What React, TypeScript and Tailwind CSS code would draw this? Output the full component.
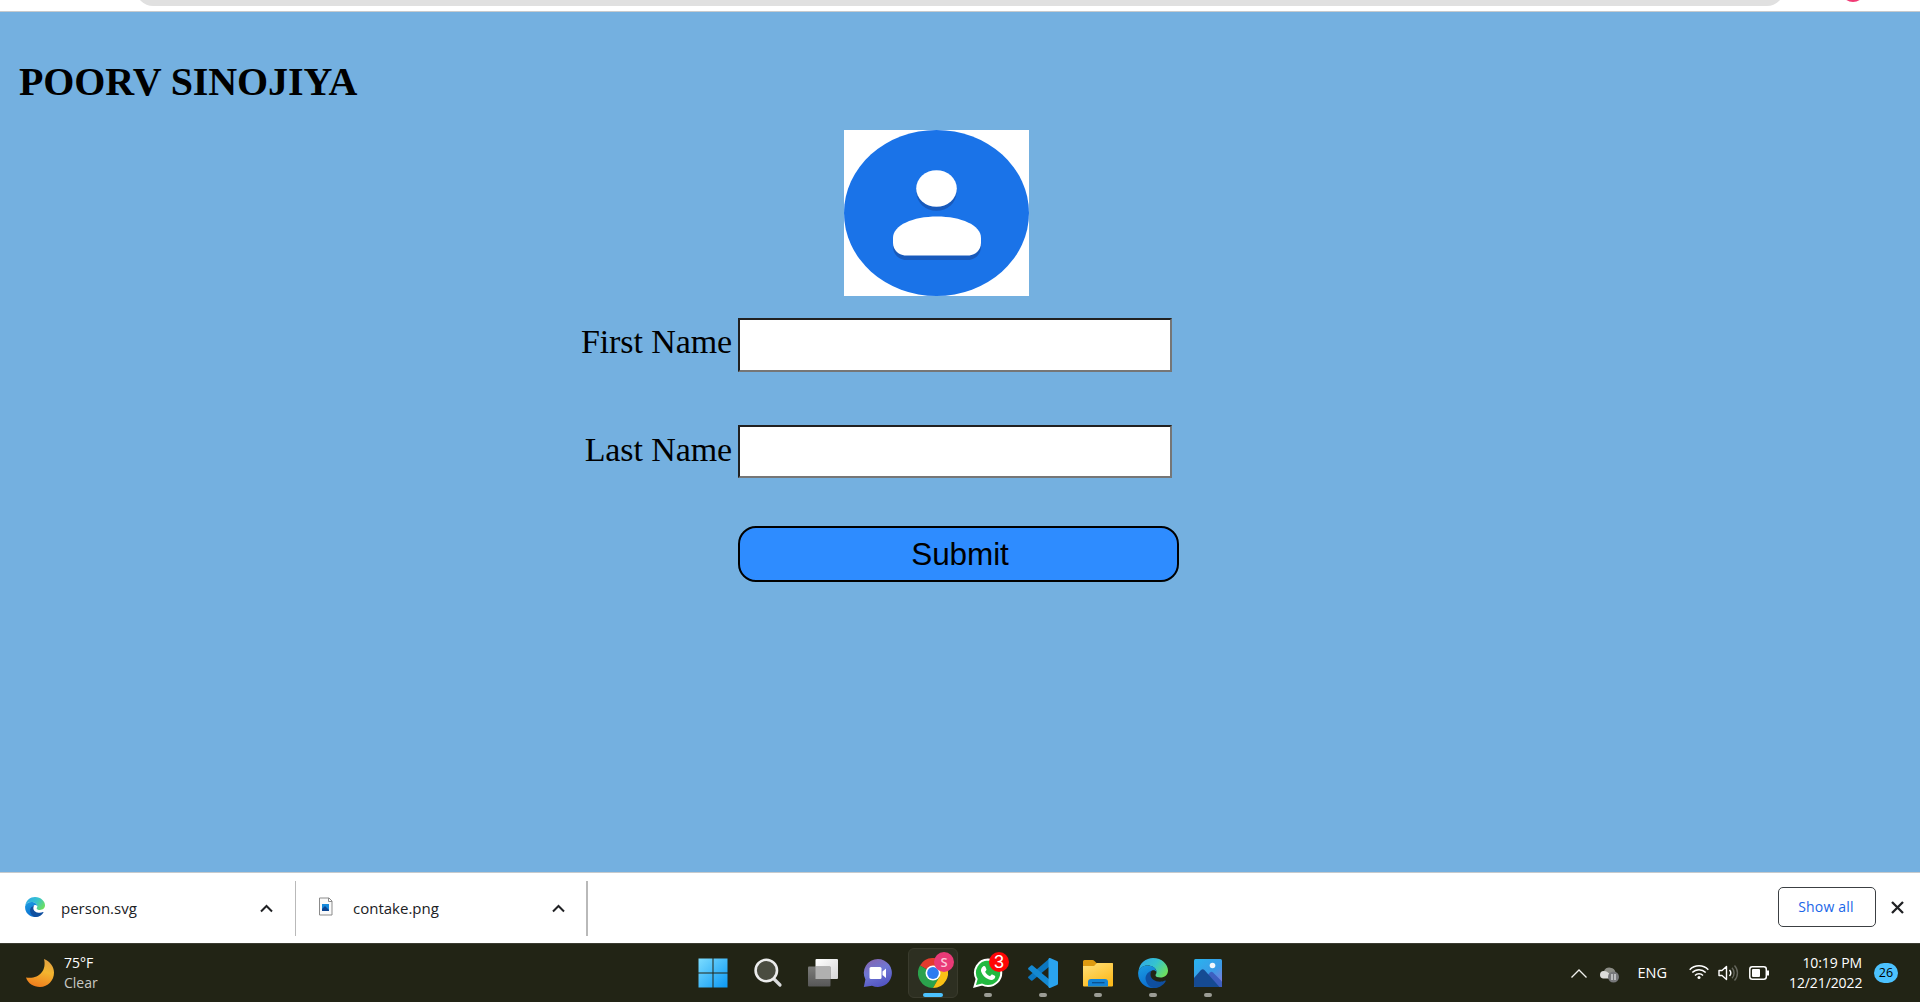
import React from "react";

const ui = "font-['Open_Sans','Noto_Sans',sans-serif]";

function EdgeIcon({ size, id }: { size: number; id: string }) {
  return (
    <svg width={size} height={size} viewBox="0 0 30 30" className="shrink-0">
      <defs>
        <linearGradient id={id + "a"} x1="0" y1="0.2" x2="1" y2="0.7">
          <stop offset="0" stopColor="#2fa8e8" />
          <stop offset="0.5" stopColor="#35c3cf" />
          <stop offset="1" stopColor="#6fe05a" />
        </linearGradient>
        <linearGradient id={id + "b"} x1="0" y1="0" x2="0.4" y2="1">
          <stop offset="0" stopColor="#1b9de2" />
          <stop offset="1" stopColor="#0c6fd0" />
        </linearGradient>
      </defs>
      <path d="M.5 13C1.500 5 8 0 15 0c9 0 15 6.500 15 12.500 0 4.500-3.500 7-7.500 7-3 0-5-1-5-2.300 0-.9 1-1.400 1-3.200C18.500 10 14 7.500 9.500 7.500 5 7.500 1.800 10 .5 13z" fill={`url(#${id}a)`} />
      <path d="M.2 14C1 10 5 7.500 9.500 7.500c5 0 9 2.800 9 6.500-1-1.800-3-2.300-4.500-1.500-3 1.500-4.500 5-3 9 1.500 4.500 5 7.500 9 7.500-2 .9-4 1-5 1C6 30-.6 22.500.2 14z" fill={`url(#${id}b)`} />
      <path d="M13.500 12.700c-4 1.300-6.500 5-5.800 9C8.500 26 12 29.800 16 30c5.500 0 9.500-3 11.700-6.800.3-.6-.1-1-.7-.7-1.500.8-3 1.200-5 1.200-5 0-9.500-3-9.500-7 0-1.700.5-3 1-4z" fill="#0f4fa0" />
    </svg>
  );
}

function Download({ icon, name, className }: { icon: React.ReactNode; name: string; className: string }) {
  return (
    <div className={"flex h-[55px] items-center border-[#b9b9b9] " + className}>
      <div className="flex w-9 shrink-0 pb-[3px]">{icon}</div>
      <span className="-mt-[2px] text-[15px] leading-5 text-[#202124]">{name}</span>
      <svg width="13" height="9" viewBox="0 0 13 9" className="ml-auto" fill="none" stroke="#202124" strokeWidth="2">
        <path d="M1 7.500l5.500-5.500L12 7.500" />
      </svg>
    </div>
  );
}

function Task({ children, active, running }: { children: React.ReactNode; active?: boolean; running?: boolean }) {
  return (
    <div className={"relative flex h-[50px] w-[50px] items-center justify-center rounded-md " + (active ? "border border-[#3a3b2d] bg-[#2d2f21]" : "")}>
      {children}
      {active && <div className="absolute bottom-0 h-1 w-5 rounded-full bg-[#4cc2ff]" />}
      {running && <div className="absolute bottom-[1px] h-1 w-2 rounded-full bg-[#9b9c94]" />}
    </div>
  );
}

export default function App() {
  return (
    <div className="flex h-[1002px] w-[1920px] flex-col overflow-hidden bg-[#74b0e0]">
      <header className="flex h-3 shrink-0 items-start border-b border-[#c6cacd] bg-white">
        <div className="ml-[136px] h-[6px] w-[1648px] overflow-hidden">
          <div className="-mt-7 h-[34px] rounded-full bg-[#e0e0e0]" />
        </div>
        <div className="ml-[57px] h-[2px] w-6 overflow-hidden">
          <div className="-mt-[22px] size-6 rounded-full bg-[#f13a75]" />
        </div>
      </header>

      <main className="flex flex-1 flex-col font-['Liberation_Serif',serif] text-black">
        <h1 className="ml-[19px] mt-[47px] h-[46px] text-[40px] font-bold leading-[46px] tracking-[-0.1px]">POORV SINOJIYA</h1>
        <svg width="185" height="166" viewBox="0 0 185 166" className="ml-[844px] mt-[25px] shrink-0">
          <rect width="185" height="166" fill="#fff" />
          <ellipse cx="92.500" cy="83" rx="92.500" ry="83" fill="#1a73e8" />
          <ellipse cx="92.500" cy="62.500" rx="20" ry="18.300" fill="#185abc" />
          <ellipse cx="92.500" cy="58.500" rx="20.300" ry="18.300" fill="#fff" />
          <path d="M49 112c0-13 20-21 44-21s44 8 44 21v5c0 7-6 13-13 13H62c-7 0-13-6-13-13z" fill="#185abc" />
          <path d="M49 108c0-13 20-21.500 44-21.500s44 8.500 44 21.500v5c0 7-6 12.500-13 12.500H62c-7 0-13-5.500-13-12.500z" fill="#fff" />
        </svg>
        <form className="mt-[22px] grid grid-cols-[732px_441px] gap-x-[6px] text-[34px] tracking-[-0.1px]">
          <label htmlFor="first" className="h-[107px] pt-1 text-right leading-[40px]">First Name</label>
          <input id="first" className="h-[54px] w-[434px] border-2 border-b-[#767676] border-l-[#212121] border-r-[#767676] border-t-[#212121] bg-white" />
          <label htmlFor="last" className="h-[101px] pt-[5px] text-right leading-[40px]">Last Name</label>
          <input id="last" className="h-[53px] w-[434px] border-2 border-b-[#767676] border-l-[#212121] border-r-[#767676] border-t-[#212121] bg-white" />
          <button type="button" className="col-start-2 h-[56px] rounded-[18px] border-2 border-black bg-[#2e8cff] pl-[3px] font-['Liberation_Sans',sans-serif] text-[31.500px] leading-[52px] tracking-[-0.1px]">Submit</button>
        </form>
      </main>

      <section className={"flex h-[71px] shrink-0 border-t border-[#c6cacd] bg-white pt-2 " + ui}>
        <Download
          className="w-[296px] border-r pl-[25px] pr-[22px]"
          icon={<EdgeIcon size={20} id="ed" />}
          name="person.svg"
        />
        <Download
          className="w-[292px] border-r-2 pl-[21px] pr-[21px]"
          icon={
            <svg width="16" height="20" viewBox="0 0 16 20" className="-mt-px ml-px">
              <path d="M1.500 1h9.500l3 3v14h-12.500z" fill="#fafafa" stroke="#8b8b8b" />
              <path d="M10.500 1v3.500H14" fill="none" stroke="#8b8b8b" />
              <path d="M4 7h7v7H4z" fill="#1689dc" />
              <path d="M4 12l3-3 4 4v1H4z" fill="#0b4490" />
            </svg>
          }
          name="contake.png"
        />
        <button type="button" className="ml-auto mt-[6px] h-10 w-[98px] rounded-[5px] border border-[#3c4043] pb-[2px] pr-[2px] text-[14px] font-medium tracking-[0.2px] text-[#1a66e8]">Show all</button>
        <svg width="13" height="13" viewBox="0 0 13 13" className="ml-[15px] mr-4 mt-[20px]" stroke="#202124" strokeWidth="2.300">
          <path d="M1 1l11 11M12 1L1 12" />
        </svg>
      </section>

      <footer className={"relative flex h-[59px] shrink-0 items-center border-t border-[#3b3c31] bg-[#222415] text-white " + ui}>
        <svg width="29" height="33" viewBox="0 0 29 33" className="ml-[26px]">
          <defs>
            <linearGradient id="moon" x1="0.6" y1="0" x2="0.3" y2="1">
              <stop offset="0" stopColor="#e2a241" />
              <stop offset="0.4" stopColor="#f3b52f" />
              <stop offset="1" stopColor="#ef7a1c" />
            </linearGradient>
          </defs>
          <path d="M18 2c6 2.500 10 7.500 10 13.500 0 8-6 14.500-14 14.500C7.500 30 2 26.500 0 20.500c12 2 21-6 18-18.500z" fill="url(#moon)" />
        </svg>
        <div className="ml-[9px] text-[14px] leading-5">
          <div>75°F</div>
          <div className="text-[#c9c9c4]">Clear</div>
        </div>

        <nav className="absolute left-[688px] top-1 flex gap-[5px]">
          <Task>
            <svg width="30" height="30" viewBox="0 0 30 30">
              <defs>
                <linearGradient id="win" x1="0" y1="0" x2="1" y2="1">
                  <stop offset="0" stopColor="#7cdcff" />
                  <stop offset="1" stopColor="#0b98f4" />
                </linearGradient>
              </defs>
              <path d="M.5.5h14v14H.5zM15.500.5h14v14h-14zM.5 15.500h14v14H.5zM15.500 15.500h14v14h-14z" fill="url(#win)" />
            </svg>
          </Task>
          <Task>
            <svg width="30" height="30" viewBox="0 0 30 30">
              <path d="M20 20l7 7" stroke="#d9dadb" strokeWidth="3.200" strokeLinecap="round" />
              <circle cx="13.300" cy="12.500" r="10.700" fill="#4a4c40" stroke="#ececec" strokeWidth="2.600" />
            </svg>
          </Task>
          <Task>
            <svg width="30" height="30" viewBox="0 0 30 30">
              <defs>
                <linearGradient id="deskBack" x1="0" y1="0" x2="1" y2="1">
                  <stop offset="0" stopColor="#ffffff" />
                  <stop offset="1" stopColor="#d6d6d6" />
                </linearGradient>
                <linearGradient id="deskFront" x1="0" y1="0" x2="0" y2="1">
                  <stop offset="0" stopColor="#7c7c7a" />
                  <stop offset="1" stopColor="#575757" />
                </linearGradient>
              </defs>
              <rect x="7.500" y="1" width="22.500" height="20" rx="1" fill="url(#deskBack)" />
              <rect x="0" y="8.500" width="22.500" height="20" rx="1" fill="url(#deskFront)" />
              <rect x="7.500" y="8.500" width="15" height="12.500" fill="#b0b0b0" />
            </svg>
          </Task>
          <Task>
            <svg width="30" height="30" viewBox="0 0 30 30">
              <defs>
                <linearGradient id="chat" x1="0.2" y1="0" x2="0.6" y2="1">
                  <stop offset="0" stopColor="#8464ae" />
                  <stop offset="0.45" stopColor="#7078d4" />
                  <stop offset="1" stopColor="#5153c2" />
                </linearGradient>
              </defs>
              <path d="M15 1a14 14 0 1 1-6 26.700L.8 29l1.600-7.500A14 14 0 0 1 15 1z" fill="url(#chat)" />
              <rect x="6.500" y="9" width="12" height="12" rx="1.500" fill="#fff" />
              <path d="M19.500 13.500l3.500-3v9.500l-3.500-3z" fill="#fff" />
            </svg>
          </Task>
          <Task active>
            <svg width="30" height="30" viewBox="0 0 30 30">
              <path d="M15 15L2 7.500A15 15 0 0 1 28 7.500H15z" fill="#e33b2e" />
              <path d="M15 15L2 7.500A15 15 0 0 0 15 30l6.500-11.300z" fill="#2ba24c" />
              <path d="M15 7.500h13A15 15 0 0 1 15 30l6.500-11.300z" fill="#fbc116" />
              <circle cx="15" cy="15" r="7.500" fill="#fff" />
              <circle cx="15" cy="15" r="5.900" fill="#2d7cf0" />
            </svg>
            <span className="absolute left-[25px] top-[3px] flex size-5 items-center justify-center rounded-full bg-[#e93a77] text-[13px] font-semibold leading-none text-[#fbc6d9]">S</span>
          </Task>
          <Task running>
            <svg width="30" height="30" viewBox="0 0 30 30">
              <path d="M15 1.500A13 13 0 0 1 15 28c-2.300 0-4.200-.5-6-1.500L1.500 28.500 3.600 21A13.200 13.200 0 0 1 15 1.500z" fill="#22b940" stroke="#fff" strokeWidth="2" />
              <path d="M10 8.500c1-.8 2-.6 2.400.3l1 2.400c.2.700-.1 1.200-1.300 2.500 1.100 2.200 2.800 3.700 5 4.500 1-1.300 1.500-1.900 2.200-1.600l2.500 1.200c.8.500.5 2-.5 3-1.600 1.500-3.600 1.500-5.800.5-3.500-1.400-6.300-4.400-7.300-7.500-.7-2.200.3-4.300 1.800-5.300z" fill="#fff" />
            </svg>
            <span className="absolute left-[26px] top-[4px] flex size-5 items-center justify-center rounded-full bg-[#ff0606] font-['Liberation_Sans',sans-serif] text-[18px] leading-none">3</span>
          </Task>
          <Task running>
            <svg width="30" height="30" viewBox="0 0 30 30">
              <path d="M22 0v8L4.500 22.500c-.5.400-1 .3-1.400 0L.5 20.300c-.6-.6-.6-1.200 0-1.800z" fill="#0b76bf" />
              <path d="M22 30v-8L4.500 7.500c-.5-.4-1-.3-1.400 0L.5 9.700c-.6.600-.6 1.200 0 1.800z" fill="#1489d2" />
              <path d="M22 0l7 3c.7.300 1 .8 1 1.500v21c0 .7-.3 1.200-1 1.500l-7 3c-1 .2-1.500-.5-1.500-1V1c0-.6.500-1.200 1.500-1z" fill="#2aa3ee" />
            </svg>
          </Task>
          <Task running>
            <svg width="30" height="30" viewBox="0 0 30 30">
              <defs>
                <linearGradient id="folder" x1="0" y1="0" x2="0.6" y2="1">
                  <stop offset="0" stopColor="#ffe07a" />
                  <stop offset="1" stopColor="#fcbb1e" />
                </linearGradient>
              </defs>
              <path d="M0 3.500Q0 2 1.500 2h8q1 0 2 1l2 2H29q1 0 1 1v8H0z" fill="#dd9a10" />
              <path d="M0 8h11l3-3h15q1 0 1 1v21.500q0 1-1 1H1q-1 0-1-1z" fill="url(#folder)" />
              <path d="M5 28.500V24q0-3 3-3h14q3 0 3 3v4.500z" fill="#1384d6" />
              <path d="M9 24.700h12.500" stroke="#0b4f8c" strokeWidth="1.300" />
            </svg>
          </Task>
          <Task running><EdgeIcon size={30} id="et" /></Task>
          <Task running>
            <svg width="30" height="30" viewBox="0 0 30 30">
              <defs>
                <linearGradient id="pic" x1="0.2" y1="0" x2="1" y2="1">
                  <stop offset="0" stopColor="#2bb0ee" />
                  <stop offset="0.500" stopColor="#3c9ae6" />
                  <stop offset="1" stopColor="#9173d8" />
                </linearGradient>
              </defs>
              <rect x="1" y="1" width="28" height="28" rx="1.500" fill="url(#pic)" />
              <path d="M14 18l3-3.500q1.500-1.500 3 0l9 9V29H14z" fill="#3d5fc0" />
              <path d="M1 20l7-8q1.700-1.700 3.400 0L26.500 29H2.500Q1 29 1 27.500z" fill="#154a92" />
              <circle cx="19.500" cy="7.500" r="2.800" fill="#f4f7fb" />
            </svg>
          </Task>
        </nav>

        <div className="ml-auto flex items-center">
          <svg width="16" height="9" viewBox="0 0 16 9" fill="none" stroke="#f1f1ee" strokeWidth="1.300">
            <path d="M.5 8.500L8 1l7.500 7.500" />
          </svg>
          <svg width="21" height="18" viewBox="0 0 21 18" className="ml-[12px] mt-[2px]">
            <path d="M5 6a6 5.500 0 0 1 11.500 1.500L13 13H6z" fill="#8c8d86" />
            <path d="M4 13.500a3.800 3.800 0 0 1 .5-7.500c3 0 4 1 7 3.500l-1 4z" fill="#dcdcda" />
            <circle cx="14.500" cy="12" r="5.500" fill="#77787a" />
            <path d="M13 9v6M16 9v6" stroke="#fff" strokeWidth="1" />
          </svg>
          <span className="ml-[17px] text-[14.500px]">ENG</span>
          <svg width="20" height="16" viewBox="0 0 20 16" className="-mt-[2px] ml-[22px]" fill="none" stroke="#fff" strokeWidth="1.500">
            <path d="M.7 5.700a13 13 0 0 1 18.600 0M3.300 8.600a9.300 9.300 0 0 1 13.400 0M6 11.400a5.600 5.600 0 0 1 8 0" />
            <circle cx="10" cy="13.600" r="1.500" fill="#fff" stroke="none" />
          </svg>
          <svg width="21" height="18" viewBox="0 0 21 18" className="ml-[9px]" fill="none" stroke="#fff" strokeWidth="1.400">
            <path d="M1 6.500h3L8.500 2.500v13L4 11.500H1z" strokeLinejoin="round" />
            <path d="M11.500 6a4.500 4.500 0 0 1 0 6" />
            <path d="M14 3.800a7.500 7.500 0 0 1 0 10.400M16.500 1.500a11 11 0 0 1 0 15" stroke="#66675e" />
          </svg>
          <svg width="21" height="14" viewBox="0 0 21 14" className="ml-[10px]">
            <rect x=".8" y=".8" width="16.500" height="12.400" rx="2.500" fill="none" stroke="#fff" strokeWidth="1.500" />
            <rect x="3" y="3" width="8" height="8" rx="1" fill="#fff" />
            <path d="M19 4.500v5" stroke="#fff" strokeWidth="2" />
          </svg>
          <div className="ml-[19px] w-[73px] whitespace-nowrap text-right text-[14px] leading-5 tracking-[-0.1px]">
            <div>10:19 PM</div>
            <div>12/21/2022</div>
          </div>
          <span className="ml-3 mr-[22px] flex h-5 w-6 items-center justify-center rounded-full bg-[#4cc2ff] text-[12.500px] text-black">26</span>
        </div>
      </footer>
    </div>
  );
}
